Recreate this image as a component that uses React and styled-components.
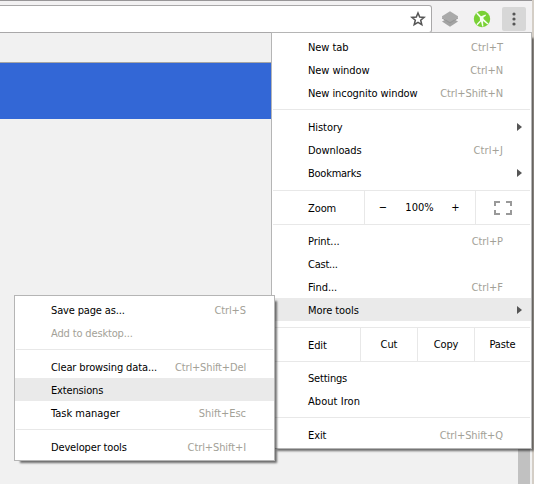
import React from "react";
import styled, { createGlobalStyle } from "styled-components";

const GlobalStyle = createGlobalStyle`
  * { box-sizing: border-box; }
  html, body { margin: 0; padding: 0; overflow: hidden; }
  body { background: #f1f1f1; }
`;

const Window = styled.div`
  position: relative;
  display: flex;
  width: 534px;
  height: 484px;
  overflow: hidden;
  background: #f1f1f1;
  font-family: "DejaVu Sans Condensed", "DejaVu Sans", sans-serif;
  font-stretch: condensed;
  font-size: 11px;
  color: #000;
`;

const Browser = styled.div`
  display: flex;
  flex-direction: column;
  width: 532px;
`;

const WindowEdge = styled.div`
  width: 2px;
  background: #d4cec6;
`;

const Toolbar = styled.div`
  display: flex;
  align-items: flex-start;
  height: 33px;
  border-top: 1px solid #979597;
  background: #f2f1f2;
`;

const AddressBar = styled.div`
  display: flex;
  align-items: center;
  justify-content: flex-end;
  width: 432px;
  height: 28px;
  margin-top: 4px;
  padding-right: 5px;
  border: 1px solid #a9a8a9;
  border-left: 0;
  border-radius: 0 3px 3px 0;
  background: #fff;
`;

const Actions = styled.div`
  display: flex;
  align-items: center;
  height: 24px;
  margin: 6px 0 0 9px;
`;

const ExtensionIcon = styled.svg`
  display: block;
  width: 18px;
  height: 18px;
  margin-right: 14px;
`;

const StarIcon = styled.svg`
  display: block;
  width: 16px;
  height: 16px;
`;

const MenuButton = styled.div`
  display: flex;
  align-items: center;
  justify-content: center;
  width: 24px;
  height: 24px;
  margin-left: -3px;
  border-radius: 2px;
  background: #d7d7d7;
`;

const Page = styled.div`
  display: flex;
  flex: 1;
  flex-direction: column;
  background: #f1f1f1;
`;

const Banner = styled.div`
  height: 57px;
  margin-top: 29px;
  border-top: 1px solid #a5a5a5;
  background: #3367d6;
`;

const Scrollbar = styled.div`
  flex: 1;
  align-self: flex-end;
  width: 12px;
  margin-right: 2px;
  background: #c1c1c1;
`;

const Menu = styled.div`
  position: absolute;
  left: ${(p) => p.$left}px;
  top: ${(p) => p.$top}px;
  width: 261px;
  padding: 2px 0;
  border: 1px solid #b5b5b5;
  background: #fff;
  box-shadow: 4px 4px 2px -2px rgba(0, 0, 0, 0.55);
`;

const Item = styled.div`
  display: flex;
  align-items: center;
  height: 23px;
  padding: 0 28px 0 36px;
  line-height: 23px;
  white-space: pre;
  color: ${(p) => (p.$disabled ? "#a3a197" : "#000")};
  background: ${(p) => (p.$active ? "#eaeaea" : "transparent")};
`;

const Label = styled.span`
  flex: 1;
  padding-top: 2px;
  line-height: 21px;
  letter-spacing: ${(p) => p.$spacing}px;
`;

const Shortcut = styled.span`
  padding-top: 2px;
  line-height: 21px;
  color: #a3a197;
  letter-spacing: ${(p) => p.$spacing}px;
`;

const Arrow = styled.svg`
  display: block;
  width: 5px;
  height: 8px;
  margin-right: -19px;
`;

const Separator = styled.div`
  height: 1px;
  margin: 5px 1px;
  background: #e8e8e8;
`;

const ButtonRow = styled.div`
  display: flex;
  height: 35px;
  margin: 6px 1px 4px;
  border: solid #e8e8e8;
  border-width: 1px 0;
  line-height: 33px;
`;

const RowTitle = styled.div`
  flex: 1;
  padding-left: 35px;
  padding-top: 1px;
  letter-spacing: -0.1px;
`;

const Cell = styled.div`
  display: flex;
  align-items: center;
  justify-content: center;
  width: ${(p) => p.$width}px;
  border-left: 1px solid #e8e8e8;
  letter-spacing: -0.1px;
`;

const ZoomControls = styled.div`
  display: grid;
  grid-template-columns: 36px 37px 35px;
  width: 111px;
  border-left: 1px solid #e8e8e8;
  text-align: center;
`;

function Entry({ text, keys, arrow, active, disabled, spacing = -0.08, keySpacing = -0.1 }) {
  return (
    <Item $active={active} $disabled={disabled}>
      <Label $spacing={spacing}>{text}</Label>
      {keys && <Shortcut $spacing={keySpacing}>{keys}</Shortcut>}
      {arrow && (
        <Arrow viewBox="0 0 5 8">
          <path d="M0 0L5 4L0 8Z" fill="#555" />
        </Arrow>
      )}
    </Item>
  );
}

export default function App() {
  return (
    <>
      <GlobalStyle />
      <Window>
        <Browser>
          <Toolbar>
            <AddressBar>
              <StarIcon viewBox="0 0 16 16">
                <path
                  d="M8 2L9.7 6.1L14.1 6.4L10.7 9.3L11.8 13.7L8 11.3L4.2 13.7L5.3 9.3L1.9 6.4L6.3 6.1Z"
                  fill="none"
                  stroke="#555"
                  strokeWidth="1.5"
                />
              </StarIcon>
            </AddressBar>
            <Actions>
              <ExtensionIcon viewBox="0 0 18 18">
                <path d="M1 11.5L9 7L17 11.5L9 16.7Z" fill="#a3a3a3" />
                <path d="M1 6.2L9 1.2L17 6.2V7.2L9 12.5L1 7.2Z" fill="#a9a9a9" />
                <path d="M1 7.2L9 12.2L17 7.2V8.6L9 13.4L1 8.6Z" fill="#969696" />
              </ExtensionIcon>
              <ExtensionIcon viewBox="0 0 18 18">
                <circle cx="9" cy="9" r="8.2" fill="#79d135" />
                <path
                  d="M3.2 3.4L4.4 2.6L8 6.2L12.6 4.6L13 5.6L10.4 7.6L10.6 9L15.4 13.4L14.6 14.4L10 11L10.4 16.4L9.2 16.6L8 11.6L4.4 15.2L3.4 14.2L7 10.4L6.8 7.4Z"
                  fill="#f5fff0"
                />
              </ExtensionIcon>
              <MenuButton>
                <svg width="4" height="14" viewBox="0 0 4 14">
                  <circle cx="2" cy="2" r="1.6" fill="#555" />
                  <circle cx="2" cy="7" r="1.6" fill="#555" />
                  <circle cx="2" cy="12" r="1.6" fill="#555" />
                </svg>
              </MenuButton>
            </Actions>
          </Toolbar>
          <Page>
            <Banner />
            <Scrollbar />
          </Page>
        </Browser>
        <WindowEdge />

        <Menu $left={271} $top={32}>
          <Entry text="New tab" keys="Ctrl+T" keySpacing={0} />
          <Entry text="New window" keys="Ctrl+N" />
          <Entry text="New incognito window" keys="Ctrl+Shift+N" />
          <Separator />
          <Entry text="History" arrow />
          <Entry text="Downloads" keys="Ctrl+J" keySpacing={0.1} />
          <Entry text="Bookmarks" arrow spacing={-0.25} />
          <ButtonRow>
            <RowTitle>Zoom</RowTitle>
            <ZoomControls>
              <span>−</span>
              <span>100%</span>
              <span>+</span>
            </ZoomControls>
            <Cell $width={55}>
              <svg width="18" height="14" viewBox="0 0 18 14">
                <path
                  d="M1 5V1H6M12 1H17V5M17 9V13H12M6 13H1V9"
                  fill="none"
                  stroke="#999"
                  strokeWidth="2"
                />
              </svg>
            </Cell>
          </ButtonRow>
          <Entry text="Print..." keys="Ctrl+P" />
          <Entry text="Cast..." spacing={-0.25} />
          <Entry text="Find..." keys="Ctrl+F" keySpacing={0} />
          <Entry text="More tools" arrow active />
          <ButtonRow>
            <RowTitle>Edit</RowTitle>
            <Cell $width={57}>Cut</Cell>
            <Cell $width={57}>Copy</Cell>
            <Cell $width={56}>Paste</Cell>
          </ButtonRow>
          <Entry text="Settings" spacing={-0.2} />
          <Entry text="About Iron" spacing={0.05} />
          <Separator />
          <Entry text="Exit" keys="Ctrl+Shift+Q" />
        </Menu>

        <Menu $left={14} $top={295}>
          <Entry text="Save page as..." keys="Ctrl+S" spacing={-0.15} />
          <Entry text="Add to desktop..." disabled spacing={-0.15} />
          <Separator />
          <Entry text="Clear browsing data..." keys="Ctrl+Shift+Del" keySpacing={-0.15} spacing={-0.12} />
          <Entry text="Extensions" active spacing={-0.15} />
          <Entry text="Task manager" keys="Shift+Esc" keySpacing={-0.05} spacing={0} />
          <Separator />
          <Entry text="Developer tools" keys="Ctrl+Shift+I" spacing={-0.15} />
        </Menu>
      </Window>
    </>
  );
}
